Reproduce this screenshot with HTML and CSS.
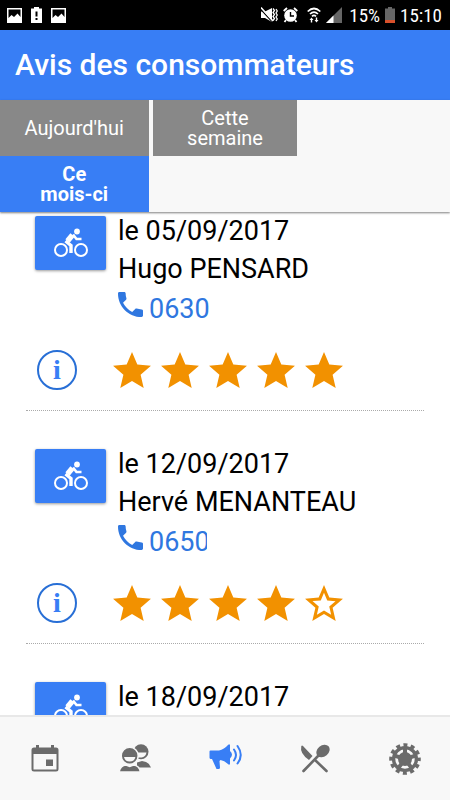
FILE: index.html
```html
<!DOCTYPE html>
<html lang="fr">
<head>
<meta charset="utf-8">
<meta name="viewport" content="width=device-width, initial-scale=1">
<title>Avis des consommateurs</title>
<link rel="stylesheet" href="styles.css">
</head>
<body>
<svg class="defs" aria-hidden="true">
  <symbol id="bike" viewBox="0 0 36 30">
    <g fill="none" stroke="currentColor">
      <circle cx="8" cy="22" r="6" stroke-width="2"/>
      <circle cx="28" cy="22" r="6" stroke-width="2"/>
      <path d="M19.500 7l-5 6" stroke-width="5.500"/>
      <path d="M12.500 13l5.500 4.500v7.500" stroke-width="3.400"/>
      <path d="M20 6.500l3.500 4.500h5" stroke-width="2.600"/>
    </g>
    <circle cx="24" cy="3.500" r="2.900" fill="currentColor"/>
  </symbol>
  <symbol id="phone" viewBox="3 3 18 18">
    <path fill="currentColor" d="M6.62 10.79c1.44 2.83 3.76 5.14 6.59 6.59l2.2-2.2c.27-.27.67-.36 1.02-.24 1.12.37 2.33.57 3.57.57.55 0 1 .45 1 1V20c0 .55-.45 1-1 1-9.39 0-17-7.61-17-17 0-.55.45-1 1-1h3.5c.55 0 1 .45 1 1 0 1.25.2 2.45.57 3.57.11.35.03.74-.25 1.02l-2.2 2.2z"/>
  </symbol>
  <symbol id="star" viewBox="2 2 20 19">
    <path fill="currentColor" d="M12 17.27L18.18 21l-1.64-7.03L22 9.24l-7.19-.61L12 2 9.19 8.63 2 9.24l5.46 4.73L5.82 21z"/>
  </symbol>
  <symbol id="star-empty" viewBox="2 2 20 19">
    <path fill="currentColor" d="M22 9.24l-7.19-.62L12 2 9.19 8.63 2 9.24l5.46 4.73L5.82 21 12 17.27 18.18 21l-1.63-7.03L22 9.24zM12 15.4l-3.76 2.27 1-4.28-3.32-2.88 4.38-.38L12 6.1l1.71 4.04 4.38.38-3.32 2.88 1 4.28L12 15.4z"/>
  </symbol>
  <symbol id="picture" viewBox="0 0 15 15">
    <path fill="currentColor" fill-rule="evenodd" d="M0 0h15v15H0zM1.500 1.500v8.500l3-3 2.500 2 3.500-3.500 3 3.500V1.500z"/>
  </symbol>
</svg>

<div class="status">
  <div class="status-group">
    <svg width="15" height="15"><use href="#picture"/></svg>
    <svg width="11" height="16" viewBox="0 0 11 16"><path fill="#fff" d="M3 0h5v1.500h3V16H0V1.500h3z"/><path fill="#000" d="M4.500 4.500h2v5h-2zM4.500 11h2v2h-2z"/></svg>
    <svg width="15" height="15"><use href="#picture"/></svg>
  </div>
  <div class="status-group status-right">
    <svg width="17" height="16" viewBox="0 0 17 16"><path fill="#fff" d="M0 4.500h4L11 1v14l-7-4H0z"/><path d="M0 2.500l11 12" stroke="#000" stroke-width="1.200"/><path d="M0 .5l12 13.500" stroke="#fff" stroke-width="1.500"/><path d="M12 1.500l1.500 2-1.500 2 1.500 2-1.500 2 1.500 2-1.500 2M15 2l1.300 2L15 6l1.300 2L15 10l1.300 2L15 14" fill="none" stroke="#fff" stroke-width="1.300"/></svg>
    <svg width="15" height="16" viewBox="0 0 15 16"><circle cx="7.500" cy="8.500" r="6.300" fill="#fff"/><path d="M.7 4L4 1M11 1l3.300 3M3 13l-1.500 2M12 13l1.500 2" stroke="#fff" stroke-width="1.800"/><path d="M7.500 5v4H11" fill="none" stroke="#000" stroke-width="1.400"/></svg>
    <svg class="wifi" width="14" height="16" viewBox="0 0 14 16"><path d="M.7 4.500q6.300-6 12.600 0M3 7q4-4 8 0M5 9.300q2-2 4 0" fill="none" stroke="#fff" stroke-width="1.700"/><path fill="#fff" d="M4.500 10.500l2 2.500H5.200v2.500H3.800V13H2.500zM9.500 15.500l-2-2.500h1.300v-2.500h1.400V13h1.300z"/></svg>
    <svg class="signal" width="16" height="16" viewBox="0 0 16 16"><path fill="#666" d="M16 0v16H0z"/><path fill="#fff" d="M7.500 8.500V16H0z"/></svg>
    <span>15%</span>
    <svg width="10" height="16" viewBox="0 0 10 16"><path fill="#666" d="M3 0h4v1.500h3V16H0V1.500h3z"/><path fill="#d9512c" d="M0 13h10v3H0z"/></svg>
    <span>15:10</span>
  </div>
</div>

<header class="title-bar"><h1>Avis des consommateurs</h1></header>

<nav class="periods" aria-label="Période">
  <button class="period" type="button">Aujourd'hui</button>
  <button class="period" type="button">Cette<br>semaine</button>
  <button class="period period-active" type="button">Ce<br>mois-ci</button>
</nav>

<main class="reviews">
  <article class="review">
    <div class="review-top">
      <button class="bike-button" type="button" aria-label="Vélo"><svg width="36" height="30"><use href="#bike"/></svg></button>
      <div class="review-text">
        <p>le 05/09/2017</p>
        <p>Hugo PENSARD</p>
        <a class="phone" href="tel:0630"><svg width="25" height="25"><use href="#phone"/></svg><span>0630</span></a>
      </div>
    </div>
    <div class="rating">
      <button class="info" type="button" aria-label="Informations">i</button>
      <div class="stars" role="img" aria-label="5 sur 5">
        <svg><use href="#star"/></svg><svg><use href="#star"/></svg><svg><use href="#star"/></svg><svg><use href="#star"/></svg><svg><use href="#star"/></svg>
      </div>
    </div>
  </article>
  <article class="review">
    <div class="review-top">
      <button class="bike-button" type="button" aria-label="Vélo"><svg width="36" height="30"><use href="#bike"/></svg></button>
      <div class="review-text">
        <p>le 12/09/2017</p>
        <p>Hervé MENANTEAU</p>
        <a class="phone" href="tel:0650"><svg width="25" height="25"><use href="#phone"/></svg><span class="phone-masked">0650</span></a>
      </div>
    </div>
    <div class="rating">
      <button class="info" type="button" aria-label="Informations">i</button>
      <div class="stars" role="img" aria-label="4 sur 5">
        <svg><use href="#star"/></svg><svg><use href="#star"/></svg><svg><use href="#star"/></svg><svg><use href="#star"/></svg><svg><use href="#star-empty"/></svg>
      </div>
    </div>
  </article>
  <article class="review">
    <div class="review-top">
      <button class="bike-button" type="button" aria-label="Vélo"><svg width="36" height="30"><use href="#bike"/></svg></button>
      <div class="review-text">
        <p>le 18/09/2017</p>
      </div>
    </div>
  </article>
</main>

<nav class="tabs" aria-label="Navigation">
  <a class="tab" href="#agenda" aria-label="Agenda">
    <svg width="32" height="32" viewBox="0 0 32 32"><path fill="currentColor" fill-rule="evenodd" d="M7 2h3v2.500h12V2h3v2.500h2q2.500 0 2.500 2.500v19q0 2.500-2.500 2.500H5q-2.500 0-2.500-2.500V7q0-2.500 2.500-2.500h2zM4.500 11v15.500h23V11zM17 16.500h7v6.500h-7z"/></svg>
  </a>
  <a class="tab" href="#clients" aria-label="Clients">
    <svg width="34" height="32" viewBox="0 0 34 32"><g fill="currentColor"><circle cx="23" cy="8.700" r="7.500"/><path d="M19 24.500v-5l5-1.500q7 .5 9 6.500z"/></g><path fill="#f8f8f8" d="M20 9.500h8.500q-1 4.500-5 5H20z"/><g fill="currentColor" stroke="#f8f8f8" stroke-width="1.500"><circle cx="11.700" cy="12.800" r="8.500"/><path d="M1 29q1.500-6.500 7-7l3.700 1.500 3.700-1.500q6 .5 7 7z"/></g><path fill="#f8f8f8" d="M6 14h11.400q-1 4.500-5.700 4.500T6 14z"/></svg>
  </a>
  <a class="tab tab-active" href="#avis" aria-label="Avis">
    <svg width="34" height="32" viewBox="0 0 34 32"><path fill="currentColor" d="M1.500 8.500q0-1 1-1H11q5-1 9.500-6h1.500v20h-1.500q-4-4-8-4.500l-1 1 .5 6.500q0 1-1 1.500H8.500L4 16H2.500q-1-.5-1-1.500z"/><path fill="currentColor" d="M22 8q4 3.500 0 7.500z"/><path d="M26 6.500q4 5.500 0 11M29.500 3q6.500 9 0 17.500" fill="none" stroke="currentColor" stroke-width="2" stroke-linecap="round"/></svg>
  </a>
  <a class="tab" href="#menu" aria-label="Restauration">
    <svg width="32" height="32" viewBox="0 0 32 32"><path fill="currentColor" d="M2.300 3q.8-1 1.700 0l9.500 10-3.500 4Q.5 10.500 2.300 3z"/><path d="M20 12L4.500 28M16 17L27.500 28" stroke="currentColor" stroke-width="2.600" stroke-linecap="round"/><ellipse cx="24" cy="8" rx="7.300" ry="5.600" fill="currentColor" transform="rotate(-40 24 8)"/></svg>
  </a>
  <a class="tab" href="#reglages" aria-label="Réglages">
    <svg width="34" height="34" viewBox="-17 -17 34 34">
      <g fill="none" stroke="currentColor"><circle r="14" stroke-width="3.600" stroke-dasharray="4 3.330" stroke-dashoffset="2"/><circle r="11.400" stroke-width="3.400"/></g>
      <circle r="7" fill="currentColor"/>
      <path d="M0 0V-11M0 0L10.500-3.400M0 0L6.500 8.900M0 0L-6.500 8.900M0 0L-10.500-3.400" stroke="currentColor" stroke-width="4"/>
    </svg>
  </a>
</nav>
</body>
</html>
```
FILE: styles.css
```css
* {
  box-sizing: border-box;
}

body {
  margin: 0;
  height: 100vh;
  display: flex;
  flex-direction: column;
  overflow: hidden;
  background: #fff;
  color: #000;
  font-family: Roboto, "Liberation Sans", sans-serif;
}

button {
  margin: 0;
  padding: 0;
  border: 0;
  font-family: inherit;
}

svg {
  display: block;
  flex: none;
}

.defs {
  position: absolute;
  width: 0;
  height: 0;
}

.status {
  flex: none;
  height: 30px;
  padding: 0 8px 0 7px;
  display: flex;
  justify-content: space-between;
  align-items: center;
  background: #000;
  color: #fff;
  font-family: "Roboto Condensed", Roboto, "Liberation Sans", sans-serif;
  font-size: 19px;
}

.status-group {
  display: flex;
  align-items: center;
  gap: 9px;
}

.status-right {
  gap: 5px;
}

.wifi {
  margin-left: 4px;
}

.signal {
  margin-right: 2px;
}

.title-bar {
  flex: none;
  height: 70px;
  padding: 0 15px;
  display: flex;
  align-items: center;
  background: #387ef5;
  color: #fff;
}

.title-bar h1 {
  margin: 0;
  font-size: 30px;
  line-height: 40px;
  font-weight: 500;
}

.periods {
  flex: none;
  display: grid;
  grid-template-columns: 33% 32%;
  grid-auto-rows: 56px;
  column-gap: 1%;
  background: #f8f8f8;
  box-shadow: 0 1px 2px rgba(0, 0, 0, 0.5);
  z-index: 1;
}

.period {
  background: #888;
  color: #fff;
  font-size: 20px;
  line-height: 20px;
}

.period-active {
  background: #387ef5;
  font-weight: 700;
}

.reviews {
  flex: 1;
  min-height: 0;
  overflow: hidden;
  padding: 0 26px;
}

.review {
  padding: 34px 0 20px 9px;
  border-bottom: 1px dotted #aaa;
}

.review:first-child {
  padding-top: 0;
}

.review-top {
  display: flex;
  align-items: flex-start;
  gap: 12px;
}

.bike-button {
  width: 71px;
  height: 54px;
  margin-top: 4px;
  display: flex;
  align-items: center;
  justify-content: center;
  border-radius: 2px;
  background: #387ef5;
  color: #fff;
  box-shadow: 0 1px 3px rgba(0, 0, 0, 0.4);
}

.review-text {
  font-size: 27px;
  line-height: 38px;
}

.review-text p {
  margin: 0;
}

.phone {
  padding-top: 2px;
  display: flex;
  gap: 6px;
  color: #2f77e0;
  text-decoration: none;
}

.phone svg {
  margin-top: 2px;
}

.phone-masked {
  width: 58px;
  overflow: hidden;
}

.rating {
  margin-top: 22px;
  padding-left: 2px;
  display: flex;
  align-items: center;
  gap: 36px;
}

.info {
  width: 40px;
  height: 40px;
  border: 2px solid #286fd6;
  border-radius: 50%;
  background: #fff;
  color: #387ef5;
  font-family: "Liberation Serif", serif;
  font-size: 28px;
  line-height: 34px;
  font-weight: 700;
}

.stars {
  display: flex;
  gap: 10px;
  color: #f29100;
}

.stars svg {
  width: 38px;
  height: 36px;
}

.tabs {
  flex: none;
  height: 85px;
  display: grid;
  grid-template-columns: repeat(5, 1fr);
  border-top: 2px solid #e8e8e8;
  background: #f8f8f8;
}

.tab {
  display: flex;
  align-items: center;
  justify-content: center;
  color: #6b6b6b;
}

.tab-active {
  color: #387ef5;
}
```
